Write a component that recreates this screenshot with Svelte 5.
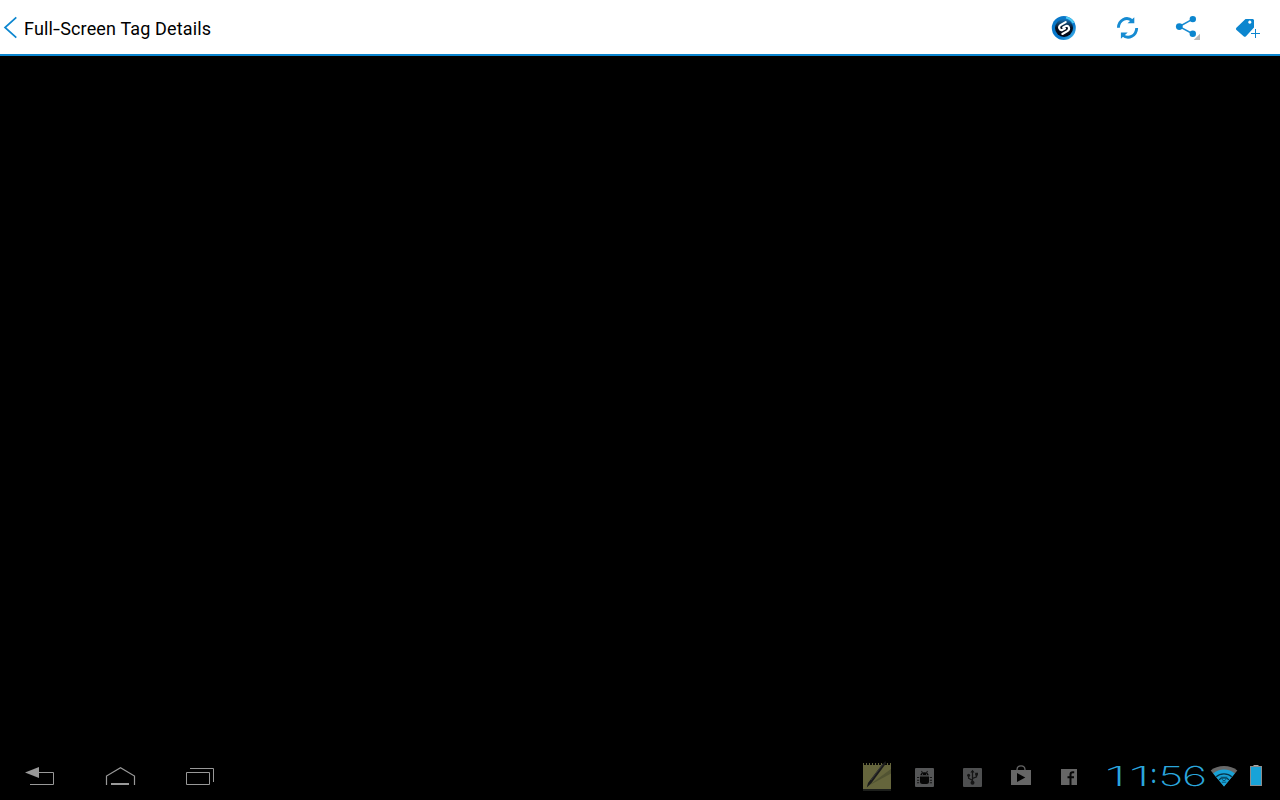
<script>
  const digits = [
    { c: '1', x: 1104.8, y: 786, s: 2.08, w: 200 },
    { c: '1', x: 1128.8, y: 786, s: 2.08, w: 200 },
    { c: ':', x: 1150.5, y: 783.2, s: 0.8, w: 400 },
    { c: '5', x: 1158.4, y: 786, s: 1.57, w: 200 },
    { c: '6', x: 1181.9, y: 786, s: 1.58, w: 200 }
  ];
</script>

<main>
  <header>
    <button class="up" aria-label="Back">
      <svg width="24" height="54" viewBox="0 0 24 54"><path d="M16.3 17.3 5 27.5 16.3 37.7" fill="none" stroke="#0c86cf" stroke-width="1.7" /></svg>
    </button>
    <h1>Full<span class="dash">-</span>Screen Tag Details</h1>
    <div class="actions">
      <button aria-label="Tag now">
        <svg width="60" height="54" viewBox="1040 0 60 54">
          <defs>
            <linearGradient id="ring" x1="0" y1="0" x2="1" y2="1"><stop offset="0" stop-color="#0877c7" /><stop offset=".65" stop-color="#0879ce" /><stop offset="1" stop-color="#58c8f5" /></linearGradient>
            <linearGradient id="disc" x1="0" y1="0" x2="0" y2="1"><stop offset="0" stop-color="#1774b8" /><stop offset=".5" stop-color="#07101f" /><stop offset="1" stop-color="#020617" /></linearGradient>
          </defs>
          <circle cx="1063.8" cy="28" r="12" fill="url(#ring)" />
          <path d="M1066 17.5A11 11 0 0 1 1073.5 23" fill="none" stroke="#4ecbf4" stroke-width="2" />
          <circle cx="1064" cy="28" r="9" fill="url(#disc)" />
          <g fill="none" stroke="#fff" stroke-width="2.1" stroke-linecap="round">
            <path d="M1065.7 22.1 1060.8 24.8C1057.6 26.7 1059.4 31 1062.5 29.9L1065 28.5" />
            <path d="M1062.4 34 1067.4 31.1C1070.6 29.2 1068.7 24.8 1065.6 26.1L1063.2 27.5" />
          </g>
        </svg>
      </button>
      <button aria-label="Refresh">
        <svg width="60" height="54" viewBox="1100 0 60 54">
          <g fill="none" stroke="#168bd2" stroke-width="2.9">
            <path d="M1118.4 27.7C1118.7 20.1 1126.5 15.6 1132.4 20.8" />
            <path d="M1136.7 28C1136.4 35.7 1128.5 40.2 1122.6 35" />
          </g>
          <path d="M1134.3 17.2V23.2H1127.5ZM1120.9 38.8V32.4H1127.7Z" fill="#168bd2" />
        </svg>
      </button>
      <button aria-label="Share">
        <svg width="60" height="54" viewBox="1160 0 60 54">
          <path d="M1192.7 19.1 1179.3 26.6 1192.7 33.8" fill="none" stroke="#168bd2" stroke-width="1.6" />
          <g fill="#0c86cf"><circle cx="1192.8" cy="19.1" r="3.2" /><circle cx="1179.3" cy="26.6" r="3.4" /><circle cx="1192.8" cy="33.8" r="3.2" /></g>
          <path d="M1200 33.7V40H1193.7Z" fill="#b9b9b9" />
        </svg>
      </button>
      <button aria-label="Add tag">
        <svg width="60" height="54" viewBox="1220 0 60 54">
          <path fill-rule="evenodd" d="M1245.5 19H1253L1254 20V27.4L1246 36.2Q1244.8 37.2 1243.6 36.2L1236.2 29.8Q1235.5 28.7 1236.4 27.7ZM1249.8 20.6a1.6 1.6 0 1 0 .01 0Z" fill="#0c86cf" />
          <path d="M1255.5 29V38M1251 33.5H1260" stroke="#fff" stroke-width="2" />
          <path d="M1255.5 29V38M1251 33.5H1260" stroke="#0c86cf" stroke-width="1" />
        </svg>
      </button>
    </div>
  </header>

  <section aria-label="Tag details"></section>

  <footer>
    <div class="keys">
      <button aria-label="Back key">
        <svg width="80" height="48" viewBox="0 752 80 48"><path d="M25 772.5 39 767V778Z" fill="#999" /><path d="M38 772.5H53.5V784.5H30" fill="none" stroke="#999" /></svg>
      </button>
      <button aria-label="Home">
        <svg width="80" height="48" viewBox="80 752 80 48"><path d="M106.5 785V776L120.5 767.8 134.5 776V785" fill="none" stroke="#999" stroke-width="1.2" /><path d="M111 784H129" stroke="#999" stroke-width="2" /></svg>
      </button>
      <button aria-label="Recent apps">
        <svg width="80" height="48" viewBox="160 752 80 48"><path d="M186.5 772.5H209.5V784.5H186.5ZM190 768.5H213.5V782" fill="none" stroke="#999" /></svg>
      </button>
    </div>

    <div class="tray">
      <svg width="48" height="48" viewBox="853 752 48 48">
        <path d="M863 763H891V789H863Z" fill="#65653c" />
        <path d="M863 790H891" stroke="#1d1f1c" stroke-width="2" />
        <path d="M864 764H891" stroke="#050505" stroke-width="2" stroke-dasharray="2 1" />
        <path d="M868 786 891 769V773.5Z" fill="#515332" />
        <path d="M866.8 787.5 868 783 882.5 764 885.5 761 886 763.5 871.5 783Z" fill="#1b1b1b" />
        <path d="M871 780 883 764" stroke="#383838" />
      </svg>
      <svg width="48" height="48" viewBox="901 752 48 48">
        <rect x="915" y="768" width="19" height="19" rx="1" fill="#555657" />
        <path d="M920.3 775.3Q920.8 772.2 924.5 772.2T928.7 775.3ZM920 776.4H929V781.5Q929 784 926.5 784H922.5Q920 784 920 781.5Z" fill="#060606" />
        <path d="M921.5 771 922.6 773M927.5 771 926.4 773M917 777.5H919.2M917 780.2H919.2M917 782.8H919.2M929.8 777.5H932M929.8 780.2H932M929.8 782.8H932" fill="none" stroke="#151515" stroke-width="1.1" />
        <path d="M922 773.7H923V774.7H922ZM926 773.7H927V774.7H926Z" fill="#555657" />
      </svg>
      <svg width="48" height="48" viewBox="949 752 48 48">
        <rect x="963" y="768" width="19" height="19" rx="1" fill="#4e4f50" />
        <path d="M972.5 771V782M972.5 780.5 968.6 778.2V775.5M972.5 778.5 976.5 776.8V774" fill="none" stroke="#151515" stroke-width="1.3" />
        <path d="M970.4 772.5 972.5 769.8 974.6 772.5ZM975.2 772.7H978V775.5H975.2Z" fill="#151515" /><circle cx="968.6" cy="775.3" r="1.5" fill="#151515" /><circle cx="972.5" cy="782.7" r="2" fill="#151515" />
      </svg>
      <svg width="48" height="48" viewBox="997 752 48 48">
        <path d="M1011 770H1031V785H1011Z" fill="#666" /><path d="M1017 771V769.8C1017 764.6 1025 764.6 1025 769.8V771" fill="none" stroke="#666" stroke-width="1.3" /><path d="M1017 773V782L1025.3 777.5Z" fill="#000" />
      </svg>
      <svg width="48" height="48" viewBox="1045 752 48 48">
        <path d="M1061 769H1077V785H1061Z" fill="#666" /><path d="M1074.2 772.2H1072.7Q1070.5 772.2 1070.5 774.5V785M1067.5 777.2H1074" fill="none" stroke="#060606" stroke-width="2" />
      </svg>
    </div>

    <svg class="clock" width="115" height="48" viewBox="1093 752 115 48">
      {#each digits as d}
        <text font-weight={d.w} transform="translate({d.x} {d.y}) scale({d.s} 1)">{d.c}</text>
      {/each}
    </svg>
    <svg width="32" height="48" viewBox="1208 752 32 48">
      <path d="M1224 786.5 1210.7 770.6C1217 764.4 1231 764.4 1237.3 770.6Z" fill="#686868" />
      <path d="M1224 786.5 1213.2 773.4C1219 768.2 1229 768.2 1234.8 773.4Z" fill="#18a3d8" />
      <path d="M1216.2 776.7C1220.3 773 1227.7 773 1231.8 776.7M1219 779.7C1222 777.3 1226 777.3 1229 779.7" fill="none" stroke="#083346" stroke-width="1.2" />
      <path d="M1220.6 777.2H1227.4M1221.2 778H1226.8L1225 780.5H1223ZM1221.8 782.2H1226.2" fill="none" stroke="#075675" />
    </svg>
    <svg width="40" height="48" viewBox="1240 752 40 48">
      <path d="M1253.5 765H1258.5V767H1253.5Z" fill="#aaa" /><rect x="1250.5" y="766.5" width="11" height="19" fill="#18a3d8" stroke="#8c8c8c" />
    </svg>
  </footer>
</main>

<style>
  :global(body) { margin: 0; background: #000; }
  main { display: flex; flex-direction: column; width: 1280px; height: 800px; background: #000; overflow: hidden; }
  header { display: flex; align-items: center; box-sizing: border-box; height: 56px; background: #fff; border-bottom: 2px solid #0c86cf; }
  button { display: block; padding: 0; border: 0; background: none; }
  svg { display: block; flex: none; }
  h1 { margin: 0; padding-top: 3px; font: 400 18px/24px Roboto, sans-serif; letter-spacing: 0.15px; color: #000; white-space: nowrap; }
  .dash { display: inline-block; margin: 0 1px; transform: scaleX(1.4); }
  .actions { display: flex; margin-left: auto; }
  section { flex: 1; }
  footer { display: flex; height: 48px; }
  .keys, .tray { display: flex; }
  .tray { margin-left: auto; }
  .clock text { font-family: Inter, sans-serif; font-size: 27.3px; fill: #2ba6dc; }
</style>
